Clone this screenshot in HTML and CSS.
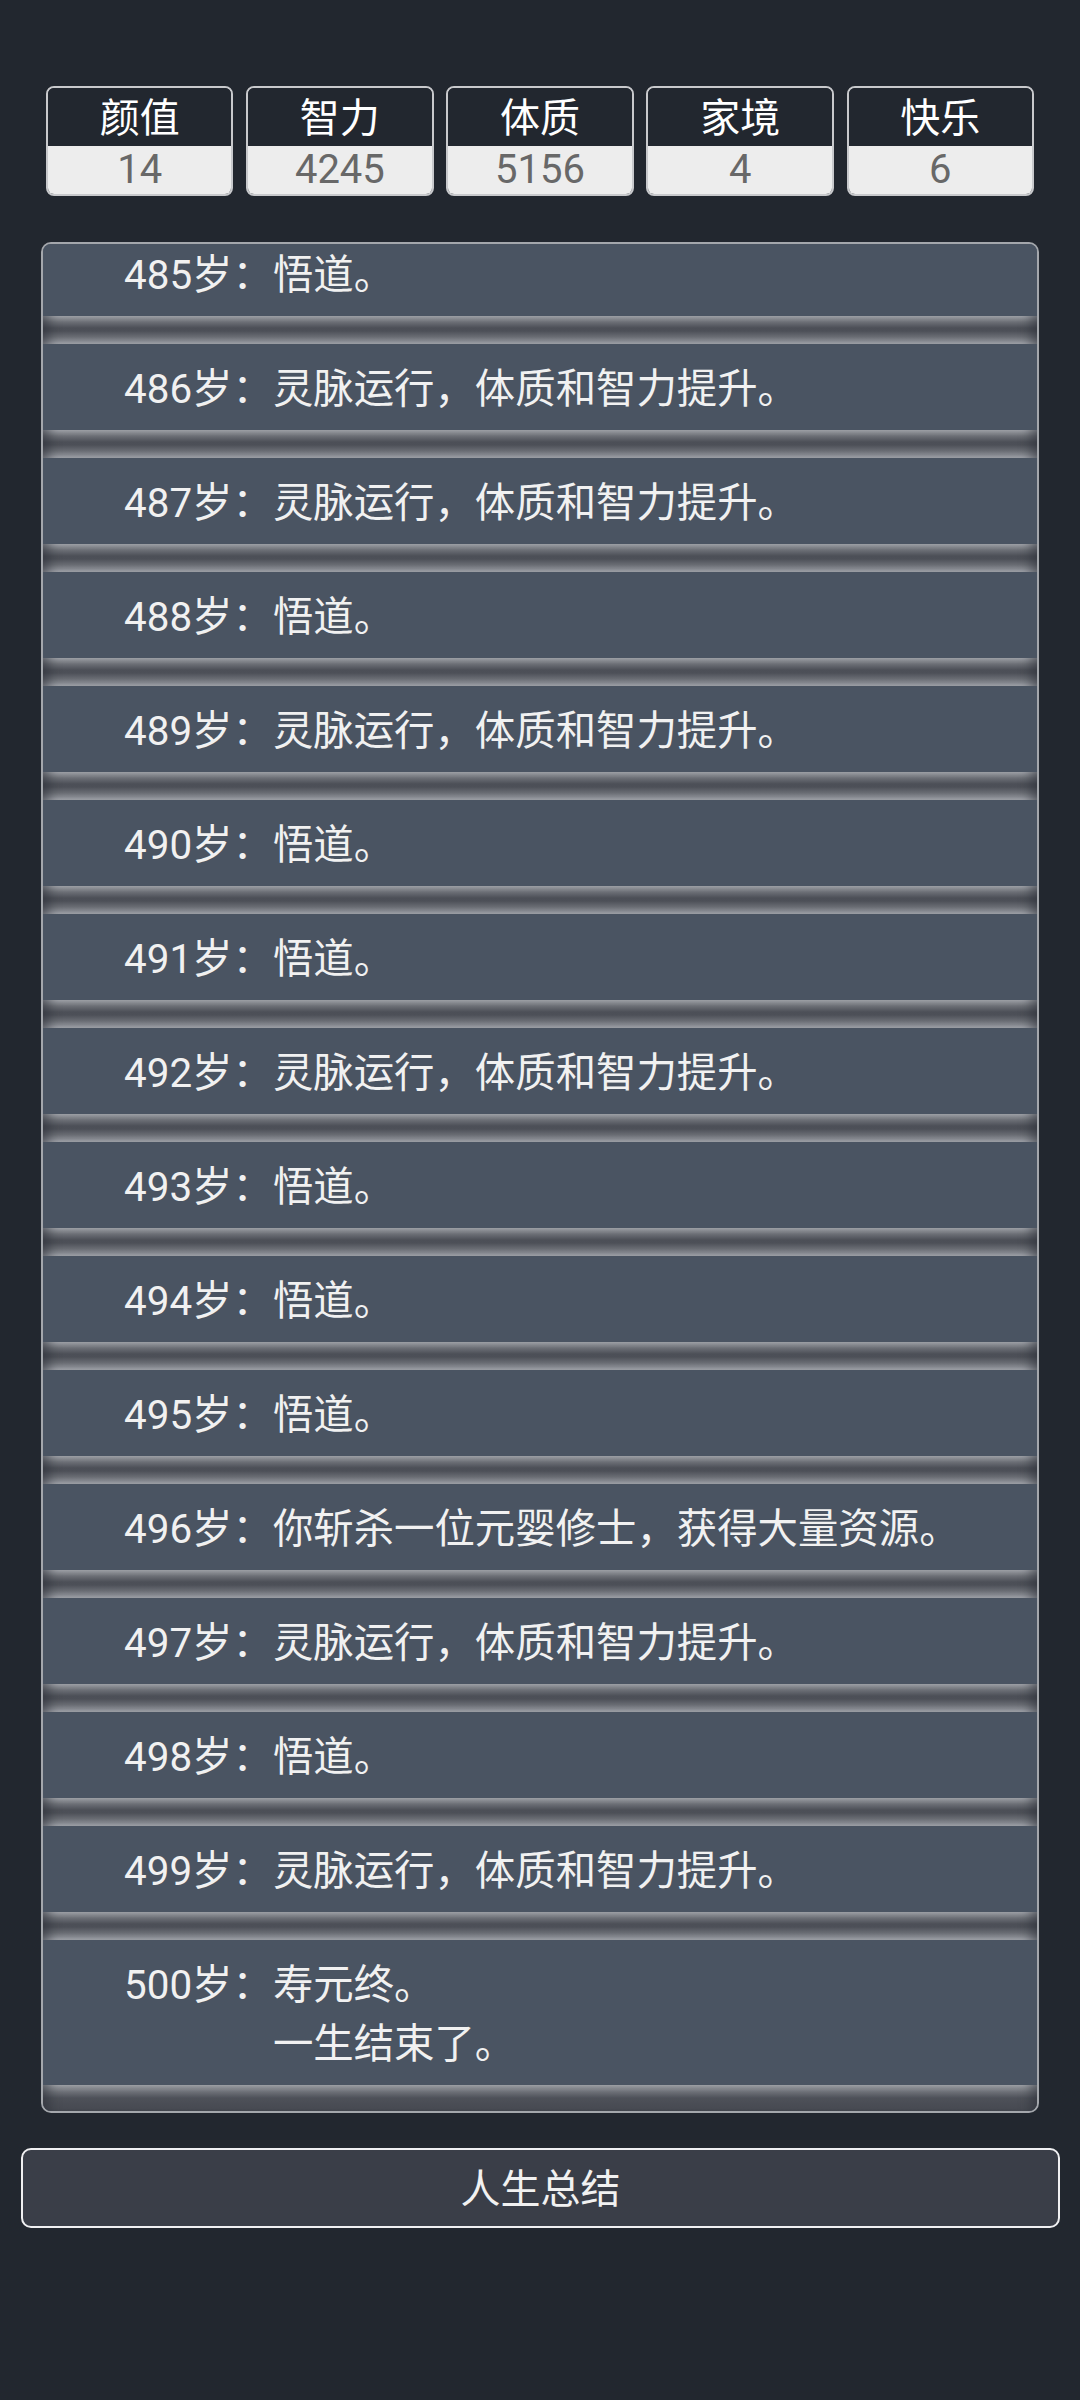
FILE: index.html
```html
<!DOCTYPE html>
<html lang="zh-CN">
<head>
<meta charset="utf-8">
<title>人生重开模拟器</title>
<link rel="stylesheet" href="styles.css">
</head>
<body>
<div class="page">
  <div class="stats">
    <div class="stat"><div class="stat-label">颜值</div><div class="stat-value">14</div></div>
    <div class="stat"><div class="stat-label">智力</div><div class="stat-value">4245</div></div>
    <div class="stat"><div class="stat-label">体质</div><div class="stat-value">5156</div></div>
    <div class="stat"><div class="stat-label">家境</div><div class="stat-value">4</div></div>
    <div class="stat"><div class="stat-label">快乐</div><div class="stat-value">6</div></div>
  </div>

  <div class="panel">
    <ul class="log">
      <li class="entry"><div class="entry-body"><span class="age">485岁：</span><span class="desc">悟道。</span></div></li>
      <li class="entry"><div class="entry-body"><span class="age">486岁：</span><span class="desc">灵脉运行，体质和智力提升。</span></div></li>
      <li class="entry"><div class="entry-body"><span class="age">487岁：</span><span class="desc">灵脉运行，体质和智力提升。</span></div></li>
      <li class="entry"><div class="entry-body"><span class="age">488岁：</span><span class="desc">悟道。</span></div></li>
      <li class="entry"><div class="entry-body"><span class="age">489岁：</span><span class="desc">灵脉运行，体质和智力提升。</span></div></li>
      <li class="entry"><div class="entry-body"><span class="age">490岁：</span><span class="desc">悟道。</span></div></li>
      <li class="entry"><div class="entry-body"><span class="age">491岁：</span><span class="desc">悟道。</span></div></li>
      <li class="entry"><div class="entry-body"><span class="age">492岁：</span><span class="desc">灵脉运行，体质和智力提升。</span></div></li>
      <li class="entry"><div class="entry-body"><span class="age">493岁：</span><span class="desc">悟道。</span></div></li>
      <li class="entry"><div class="entry-body"><span class="age">494岁：</span><span class="desc">悟道。</span></div></li>
      <li class="entry"><div class="entry-body"><span class="age">495岁：</span><span class="desc">悟道。</span></div></li>
      <li class="entry"><div class="entry-body"><span class="age">496岁：</span><span class="desc">你斩杀一位元婴修士，获得大量资源。</span></div></li>
      <li class="entry"><div class="entry-body"><span class="age">497岁：</span><span class="desc">灵脉运行，体质和智力提升。</span></div></li>
      <li class="entry"><div class="entry-body"><span class="age">498岁：</span><span class="desc">悟道。</span></div></li>
      <li class="entry"><div class="entry-body"><span class="age">499岁：</span><span class="desc">灵脉运行，体质和智力提升。</span></div></li>
      <li class="entry"><div class="entry-body"><span class="age">500岁：</span><span class="desc">寿元终。<br>一生结束了。</span></div></li>
    </ul>
  </div>

  <button class="summary" type="button">人生总结</button>
</div>
</body>
</html>
```

FILE: styles.css
```css
* {
  box-sizing: border-box;
}

html,
body {
  margin: 0;
  padding: 0;
  background: #22272f;
}

body {
  width: 1080px;
  min-height: 2400px;
  font-family: Roboto, "Noto Sans CJK SC", sans-serif;
  color: #f1f1f1;
}

.page {
  padding-top: 86px;
}

/* ---------- attribute boxes ---------- */
.stats {
  display: flex;
  gap: 12.7px;
  width: 988px;
  margin: 0 auto;
}

.stat {
  flex: 1;
  height: 110px;
  display: flex;
  flex-direction: column;
  border: 2px solid #c8c9cc;
  border-radius: 8px;
  overflow: hidden;
}

.stat-label {
  height: 58px;
  line-height: 62px;
  text-align: center;
  font-size: 40px;
  color: #ffffff;
  background: #22272f;
}

.stat-value {
  flex: 1;
  line-height: 48px;
  text-align: center;
  font-size: 40px;
  color: #686868;
  background: #ededed;
}

/* ---------- life log panel ---------- */
.panel {
  width: 998px;
  height: 1871px;
  margin: 46px 0 0 41px;
  border: 2px solid #a4a7ac;
  border-radius: 10px;
  overflow: hidden;
  background: #4a5462;
}

.log {
  list-style: none;
  margin: -14px 0 0;
  padding: 0;
}

.entry {
  display: block;
}

.entry-body {
  display: flex;
  padding: 16px 0 11px 81px;
  font-size: 40.4px;
  line-height: 59px;
  color: #f1f1f1;
  background: #4a5462;
}

.age {
  flex: none;
}

.desc {
  flex: none;
}

.entry::after {
  content: "";
  display: block;
  height: 28px;
  background: linear-gradient(to bottom,
    #a3a6ab 0px,
    #8f9298 2px,
    #6c6f76 6px,
    #4c4f57 12px,
    #4d5058 15px,
    #6a6d74 21px,
    #878a91 25px,
    #9b9ea4 27px,
    #a0a3a9 28px);
  box-shadow: inset 16px 0 12px -10px rgba(40, 44, 52, 0.55),
              inset -16px 0 12px -10px rgba(40, 44, 52, 0.55);
}

.entry:last-child::after {
  background: linear-gradient(to bottom,
    #a3a6ab 0px,
    #8f9298 2px,
    #6c6f76 7px,
    #4e5159 13px,
    #44474f 28px);
}

/* ---------- summary button ---------- */
.summary {
  display: block;
  width: 1039px;
  height: 80px;
  margin: 35px 0 0 21px;
  padding: 0;
  border: 2px solid #f0f0f2;
  border-radius: 10px;
  background: #3a3e48;
  color: #f1f1f1;
  font-family: Roboto, "Noto Sans CJK SC", sans-serif;
  font-size: 40px;
  line-height: 80px;
  text-align: center;
}
```
